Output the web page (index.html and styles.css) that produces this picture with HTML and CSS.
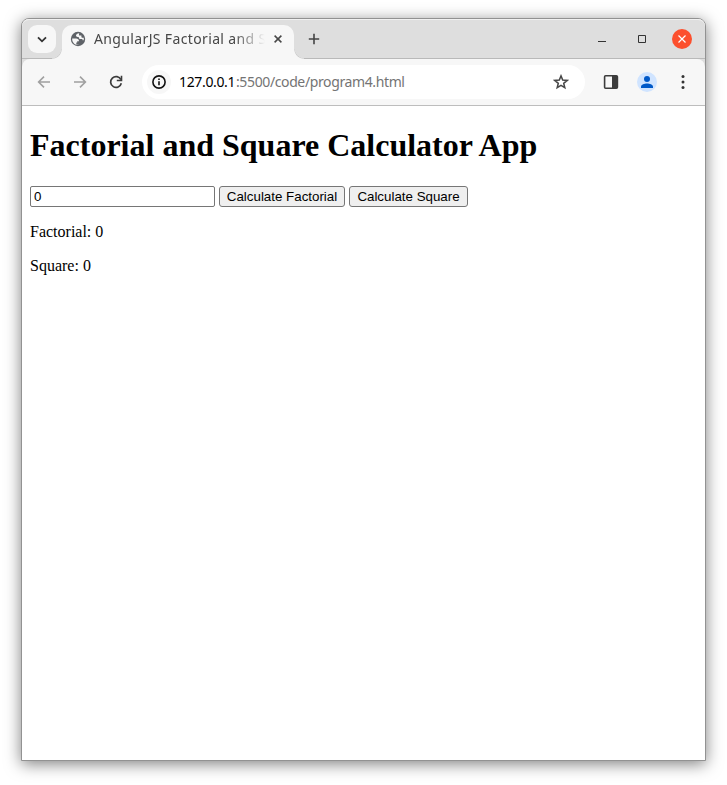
FILE: index.html
```html
<!DOCTYPE html>
<html lang="en">
<head>
<meta charset="utf-8">
<title>AngularJS Factorial and S</title>
<link rel="stylesheet" href="styles.css">
</head>
<body>
<div class="window">
  <header class="tabstrip">
    <div class="tab-search">
      <svg width="28" height="28" viewBox="0 0 28 28"><path d="M10 12.3l4 4 4-4" fill="none" stroke="#333" stroke-width="1.8"/></svg>
    </div>
    <div class="tab">
      <svg class="globe" width="16" height="16" viewBox="0 0 16 16"><circle cx="8" cy="8" r="7.2" fill="#5f6368"/><path d="M9.2 2.3C7.4 2.4 6 3.3 6 4.6c0 .9.6 1.4 1.7 1.4h1c0 1.3.6 2.1 2 2.1h1.1c.6 0 .8.5.8 1.1h1c.3-.8.3-1.6.1-2.4h-1.4c-.6 0-.9-.4-.9-1V4.600H9.700c-.5 0-.7-.3-.7-.9zM2.200 7.500h3.900c1.800 0 2.900.9 2.900 2.700H7.200v1.400h-.9v1.800c.6.200 1.300.3 2 .2v.5C4.600 14.200 1.800 11 2.200 7.500z" fill="#f7f7f7"/></svg>
      <span class="tab-title">AngularJS Factorial and S</span>
      <svg class="tab-close" width="16" height="16" viewBox="0 0 16 16"><path d="M4.600 4.600l6.800 6.800M11.400 4.600l-6.800 6.800" stroke="#474747" stroke-width="1.5"/></svg>
    </div>
    <svg class="new-tab" width="16" height="16" viewBox="0 0 16 16"><path d="M8 2.800v10.400M2.800 8h10.400" stroke="#444" stroke-width="1.600"/></svg>
    <div class="controls">
      <svg width="20" height="20" viewBox="0 0 20 20"><path d="M6 12.500h8" stroke="#333"/></svg>
      <svg width="20" height="20" viewBox="0 0 20 20"><path d="M6.500 6.500h7v7h-7z" fill="none" stroke="#333"/></svg>
      <svg width="20" height="20" viewBox="0 0 20 20"><circle cx="10" cy="10" r="10" fill="#fc4f2d"/><path d="M6.500 6.500l7 7M13.500 6.500l-7 7" stroke="#fff" stroke-width="1.200"/></svg>
    </div>
  </header>
  <nav class="toolbar">
    <svg class="back" width="16" height="16" viewBox="0 0 16 16"><path d="M14 8H3M8 2.600L2.600 8 8 13.400" fill="none" stroke="#a0a0a0" stroke-width="1.600"/></svg>
    <svg class="forward" width="16" height="16" viewBox="0 0 16 16"><path d="M2 8h11M8 2.600L13.400 8 8 13.400" fill="none" stroke="#a0a0a0" stroke-width="1.600"/></svg>
    <svg class="reload" width="16" height="16" viewBox="0 0 16 16"><path d="M12.900 5.600A5.400 5.400 0 1 0 13.300 9.200" fill="none" stroke="#3c3c3c" stroke-width="1.700"/><path d="M13.500 1.800v4.700H8.800" fill="none" stroke="#3c3c3c" stroke-width="1.600"/></svg>
    <div class="address">
      <svg width="24" height="24" viewBox="0 0 24 24"><circle cx="12" cy="12" r="12" fill="#f7f7f7"/><circle cx="12" cy="12" r="6.100" fill="none" stroke="#111" stroke-width="1.600"/><path d="M12 11.200v4M12 8.400v1.600" stroke="#111" stroke-width="1.600"/></svg>
      <span class="url"><span class="host">127.0.0.1</span><span class="path">:5500/code/program4.html</span></span>
      <svg class="star" width="16" height="16" viewBox="0 0 16 16"><path d="M8 1.900l1.700 4.200 4.500.3-3.500 2.900 1.100 4.400L8 11.300l-3.800 2.400 1.100-4.400L1.800 6.400l4.500-.3z" fill="none" stroke="#474747" stroke-width="1.500"/></svg>
    </div>
    <svg class="panel" width="16" height="16" viewBox="0 0 16 16"><rect x="1.600" y="1.800" width="12.800" height="12.400" rx="1" fill="none" stroke="#3c3c3c" stroke-width="1.600"/><path d="M9 2h5v12H9z" fill="#3c3c3c"/></svg>
    <svg class="profile" width="20" height="20" viewBox="0 0 20 20"><circle cx="10" cy="10" r="10" fill="#d0e4ff"/><circle cx="10" cy="7" r="3" fill="#0059c8"/><path d="M4 16v-1.500C4 12.500 7.500 11.400 10 11.400s6 1.100 6 3.100V16z" fill="#0059c8"/></svg>
    <svg class="menu" width="16" height="16" viewBox="0 0 16 16"><g fill="#333"><circle cx="8" cy="2.600" r="1.500"/><circle cx="8" cy="8" r="1.500"/><circle cx="8" cy="13.400" r="1.500"/></g></svg>
  </nav>
  <main class="page">
    <h1>Factorial and Square Calculator App</h1>
    <div class="form">
      <input class="number" type="text" value="0">
      <button>Calculate Factorial</button>
      <button class="square">Calculate Square</button>
    </div>
    <p>Factorial: 0</p>
    <p>Square: 0</p>
  </main>
</div>
</body>
</html>
```
FILE: styles.css
```css
* { box-sizing: border-box; }
html, body { height: 100%; }
body { margin: 0; padding: 18px 21px 24px; background: #fff; overflow: hidden; }
svg { display: block; flex: none; }

.window {
  display: flex;
  flex-direction: column;
  height: 743px;
  border: 1px solid #929292;
  border-radius: 8px 8px 0 0;
  background: #dedede;
  box-shadow: 0 3px 16px rgba(0, 0, 0, .5);
}

.tabstrip {
  display: flex;
  align-items: flex-start;
  height: 40px;
  padding: 6px 13px 0 6px;
  border-bottom: 1px solid #b9b9b9;
  border-radius: 7px 7px 0 0;
  background: #dedede;
  box-shadow: inset 0 1px #f1f1f1;
}
.tab-search { width: 28px; height: 28px; border-radius: 9px; background: #f7f7f7; }
.tab {
  position: relative;
  display: flex;
  align-items: center;
  width: 232px;
  height: 34px;
  margin-left: 6px;
  padding: 0 8px 6px;
  border-radius: 10px 10px 0 0;
  background: #f7f7f7;
}
.tab::before, .tab::after {
  content: "";
  position: absolute;
  bottom: 0;
  width: 10px;
  height: 10px;
}
.tab::before { left: -10px; background: radial-gradient(circle at 0 0, transparent 9px, #cfcfcf 9.3px, #f7f7f7 10.2px); }
.tab::after { right: -10px; background: radial-gradient(circle at 100% 0, transparent 9px, #cfcfcf 9.3px, #f7f7f7 10.2px); }
.tab-title {
  width: 176px;
  margin-left: 8px;
  white-space: nowrap;
  font: 14px/20px "Noto Sans", sans-serif;
  letter-spacing: .36px;
  color: #474747;
  -webkit-mask-image: linear-gradient(90deg, #000 140px, transparent 171px);
  mask-image: linear-gradient(90deg, #000 140px, transparent 171px);
}
.new-tab { margin: 6px 0 0 12px; }
.controls { display: flex; gap: 20px; margin: 4px 0 0 auto; }

.toolbar {
  display: flex;
  align-items: center;
  height: 47px;
  padding: 0 14px;
  border-radius: 8px 8px 0 0;
  background: #f7f7f7;
  box-shadow: inset 0 -1px #bdbdbd;
}
.toolbar > * { margin-bottom: 1px; }
.forward, .reload { margin-left: 20px; }
.address {
  display: flex;
  align-items: center;
  width: 443px;
  height: 34px;
  margin-left: 18px;
  padding: 0 16px 0 5px;
  border-radius: 17px;
  background: #fff;
}
.url { margin-left: 8px; white-space: nowrap; font: 14px/20px "Noto Sans", sans-serif; color: #747474; }
.host, .path { display: inline-block; }
.host { width: 57px; letter-spacing: -.35px; color: #000; }
.path { letter-spacing: -.38px; }
.star { margin-left: auto; }
.panel, .profile, .menu { margin-left: 18px; }

.page { flex: 1; padding: 1px 8px 0; background: #fff; font: 16px/18px "Liberation Serif", serif; color: #000; }
h1 { margin: 20px 0 22px; font-size: 32px; line-height: 37px; }
.form { display: flex; gap: 4px; }
.number, button {
  height: 21px;
  border: 1px solid #767676;
  font: 13.333px/15px "Liberation Sans", sans-serif;
  color: #000;
}
.number { width: 185px; padding: 1px 3px; border-radius: 2px; background: #fff; }
button { width: 126px; padding: 1px 0; border-radius: 3px; background: #efefef; white-space: nowrap; }
.square { width: 119px; }
p { margin: 16px 0; }
```
